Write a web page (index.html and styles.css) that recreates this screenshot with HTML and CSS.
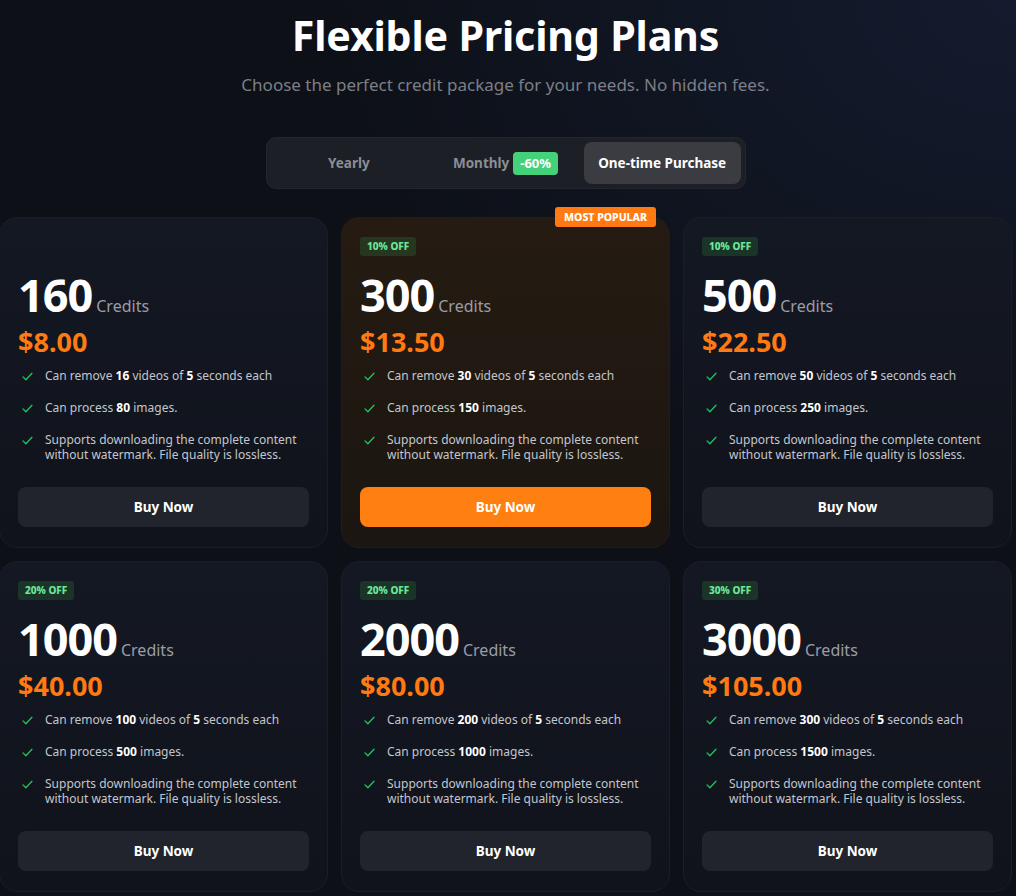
FILE: index.html
```html
<!DOCTYPE html>
<html lang="en">
<head>
<meta charset="utf-8">
<title>Flexible Pricing Plans</title>
<link rel="stylesheet" href="styles.css">
</head>
<body>
<main class="page">
  <header class="hero">
    <h1 class="title">Flexible Pricing Plans</h1>
    <p class="subtitle">Choose the perfect credit package for your needs. No hidden fees.</p>
  </header>

  <div class="toggle">
    <button class="tab">Yearly</button>
    <button class="tab">Monthly <span class="save">-60%</span></button>
    <button class="tab tab-active">One-time Purchase</button>
  </div>

  <section class="grid">
    <article class="card">
      <span class="off off-hidden">0% OFF</span>
      <div class="amount"><span class="num">160</span><span class="unit">Credits</span></div>
      <div class="price">$8.00</div>
      <ul class="features">
        <li><svg class="check" viewBox="0 0 16 16"><path d="M2.5 8.5l3.5 3.5 7.5-8"/></svg><span>Can remove <b>16</b> videos of <b>5</b> seconds each</span></li>
        <li><svg class="check" viewBox="0 0 16 16"><path d="M2.5 8.5l3.5 3.5 7.5-8"/></svg><span>Can process <b>80</b> images.</span></li>
        <li><svg class="check" viewBox="0 0 16 16"><path d="M2.5 8.5l3.5 3.5 7.5-8"/></svg><span>Supports downloading the complete content without watermark. File quality is lossless.</span></li>
      </ul>
      <button class="buy">Buy Now</button>
    </article>

    <article class="card card-popular">
      <span class="popular">MOST POPULAR</span>
      <span class="off">10% OFF</span>
      <div class="amount"><span class="num">300</span><span class="unit">Credits</span></div>
      <div class="price">$13.50</div>
      <ul class="features">
        <li><svg class="check" viewBox="0 0 16 16"><path d="M2.5 8.5l3.5 3.5 7.5-8"/></svg><span>Can remove <b>30</b> videos of <b>5</b> seconds each</span></li>
        <li><svg class="check" viewBox="0 0 16 16"><path d="M2.5 8.5l3.5 3.5 7.5-8"/></svg><span>Can process <b>150</b> images.</span></li>
        <li><svg class="check" viewBox="0 0 16 16"><path d="M2.5 8.5l3.5 3.5 7.5-8"/></svg><span>Supports downloading the complete content without watermark. File quality is lossless.</span></li>
      </ul>
      <button class="buy buy-primary">Buy Now</button>
    </article>

    <article class="card">
      <span class="off">10% OFF</span>
      <div class="amount"><span class="num">500</span><span class="unit">Credits</span></div>
      <div class="price">$22.50</div>
      <ul class="features">
        <li><svg class="check" viewBox="0 0 16 16"><path d="M2.5 8.5l3.5 3.5 7.5-8"/></svg><span>Can remove <b>50</b> videos of <b>5</b> seconds each</span></li>
        <li><svg class="check" viewBox="0 0 16 16"><path d="M2.5 8.5l3.5 3.5 7.5-8"/></svg><span>Can process <b>250</b> images.</span></li>
        <li><svg class="check" viewBox="0 0 16 16"><path d="M2.5 8.5l3.5 3.5 7.5-8"/></svg><span>Supports downloading the complete content without watermark. File quality is lossless.</span></li>
      </ul>
      <button class="buy">Buy Now</button>
    </article>

    <article class="card">
      <span class="off">20% OFF</span>
      <div class="amount"><span class="num">1000</span><span class="unit">Credits</span></div>
      <div class="price">$40.00</div>
      <ul class="features">
        <li><svg class="check" viewBox="0 0 16 16"><path d="M2.5 8.5l3.5 3.5 7.5-8"/></svg><span>Can remove <b>100</b> videos of <b>5</b> seconds each</span></li>
        <li><svg class="check" viewBox="0 0 16 16"><path d="M2.5 8.5l3.5 3.5 7.5-8"/></svg><span>Can process <b>500</b> images.</span></li>
        <li><svg class="check" viewBox="0 0 16 16"><path d="M2.5 8.5l3.5 3.5 7.5-8"/></svg><span>Supports downloading the complete content without watermark. File quality is lossless.</span></li>
      </ul>
      <button class="buy">Buy Now</button>
    </article>

    <article class="card">
      <span class="off">20% OFF</span>
      <div class="amount"><span class="num">2000</span><span class="unit">Credits</span></div>
      <div class="price">$80.00</div>
      <ul class="features">
        <li><svg class="check" viewBox="0 0 16 16"><path d="M2.5 8.5l3.5 3.5 7.5-8"/></svg><span>Can remove <b>200</b> videos of <b>5</b> seconds each</span></li>
        <li><svg class="check" viewBox="0 0 16 16"><path d="M2.5 8.5l3.5 3.5 7.5-8"/></svg><span>Can process <b>1000</b> images.</span></li>
        <li><svg class="check" viewBox="0 0 16 16"><path d="M2.5 8.5l3.5 3.5 7.5-8"/></svg><span>Supports downloading the complete content without watermark. File quality is lossless.</span></li>
      </ul>
      <button class="buy">Buy Now</button>
    </article>

    <article class="card">
      <span class="off">30% OFF</span>
      <div class="amount"><span class="num">3000</span><span class="unit">Credits</span></div>
      <div class="price">$105.00</div>
      <ul class="features">
        <li><svg class="check" viewBox="0 0 16 16"><path d="M2.5 8.5l3.5 3.5 7.5-8"/></svg><span>Can remove <b>300</b> videos of <b>5</b> seconds each</span></li>
        <li><svg class="check" viewBox="0 0 16 16"><path d="M2.5 8.5l3.5 3.5 7.5-8"/></svg><span>Can process <b>1500</b> images.</span></li>
        <li><svg class="check" viewBox="0 0 16 16"><path d="M2.5 8.5l3.5 3.5 7.5-8"/></svg><span>Supports downloading the complete content without watermark. File quality is lossless.</span></li>
      </ul>
      <button class="buy">Buy Now</button>
    </article>
  </section>
</main>
</body>
</html>
```

FILE: styles.css
```css
* { box-sizing: border-box; }
html, body {
  margin: 0;
  padding: 0;
  height: 100%;
}
body {
  background: radial-gradient(ellipse 700px 500px at 100% 0%, #141b2e 0%, rgba(20,27,46,0) 100%), #0d1017;
  font-family: "Noto Sans", "Open Sans", sans-serif;
  color: #fff;
  overflow: hidden;
}
.page {
  width: 1011px;
  display: flex;
  flex-direction: column;
  align-items: center;
}
.hero {
  text-align: center;
  padding-top: 7px;
}
.title {
  margin: 0;
  font-size: 41.2px;
  font-weight: 700;
  line-height: 56px;
  letter-spacing: -0.2px;
  color: #ffffff;
}
.subtitle {
  margin: 10px 0 0;
  font-size: 17px;
  line-height: 24px;
  color: #7c7f87;
}
.toggle {
  margin-top: 40px;
  width: 480px;
  height: 52px;
  padding: 4px;
  display: grid;
  grid-template-columns: 1fr 1fr 1fr;
  background: #1c1f26;
  border: 1px solid #23262e;
  border-radius: 10px;
}
.tab {
  border: 0;
  background: transparent;
  color: #8b8e97;
  font-family: inherit;
  font-size: 13.5px;
  font-weight: 700;
  border-radius: 8px;
  display: flex;
  align-items: center;
  justify-content: center;
  gap: 4px;
  padding: 0;
}
.tab-active {
  background: #3a3c42;
  color: #ffffff;
}
.save {
  background: #45d17a;
  color: #fff;
  font-size: 13px;
  line-height: 23px;
  padding: 0 7px;
  border-radius: 4px;
}
.grid {
  flex: none;
  margin-top: 28px;
  width: 1013px;
  display: grid;
  grid-template-columns: repeat(3, 1fr);
  gap: 13px;
}
.card {
  position: relative;
  height: 331px;
  padding: 19px 18px 20px;
  background: linear-gradient(180deg, #141823 0%, #10131b 100%);
  border: 1px solid #1a1e28;
  border-radius: 18px;
  display: flex;
  flex-direction: column;
  align-items: flex-start;
}
.card-popular {
  background: linear-gradient(180deg, #251b12 0%, #1b1611 100%);
  border-color: #241c15;
}
.popular {
  position: absolute;
  top: -11px;
  right: 13px;
  background: #ff7a12;
  color: #fff;
  font-size: 10.5px;
  font-weight: 800;
  line-height: 20px;
  padding: 0 9px;
  border-radius: 3px;
}
.off {
  background: #1a3527;
  color: #6ee79c;
  font-size: 10px;
  font-weight: 800;
  line-height: 19px;
  padding: 0 7px;
  border-radius: 3px;
}
.card-popular .off { background: #27361f; }
.off-hidden { visibility: hidden; }
.amount {
  margin-top: 16px;
  display: flex;
  align-items: baseline;
  gap: 4px;
  line-height: 46px;
}
.num {
  font-size: 45px;
  font-weight: 700;
  letter-spacing: -1px;
  color: #fff;
}
.unit {
  font-size: 16px;
  color: #9a9da6;
}
.price {
  font-size: 27px;
  font-weight: 700;
  line-height: 26px;
  color: #ff7a12;
  margin-top: 0;
}
.features {
  list-style: none;
  margin: 13px 0 0;
  padding: 0;
  display: flex;
  flex-direction: column;
  gap: 17px;
  width: 100%;
}
.features li {
  display: flex;
  align-items: flex-start;
  gap: 11px;
  font-size: 12px;
  line-height: 15px;
  color: #c3c6cd;
}
.features b {
  color: #fff;
  font-weight: 700;
}
.check {
  flex: none;
  width: 13px;
  height: 13px;
  margin-top: 2px;
  margin-left: 3px;
  fill: none;
  stroke: #22c55e;
  stroke-width: 1.6;
  stroke-linecap: round;
  stroke-linejoin: round;
}
.buy {
  margin-top: auto;
  width: 100%;
  height: 40px;
  border: 0;
  border-radius: 8px;
  background: #21242d;
  color: #fff;
  font-family: inherit;
  font-size: 13.5px;
  font-weight: 700;
}
.buy-primary {
  background: #ff7f11;
}
```
